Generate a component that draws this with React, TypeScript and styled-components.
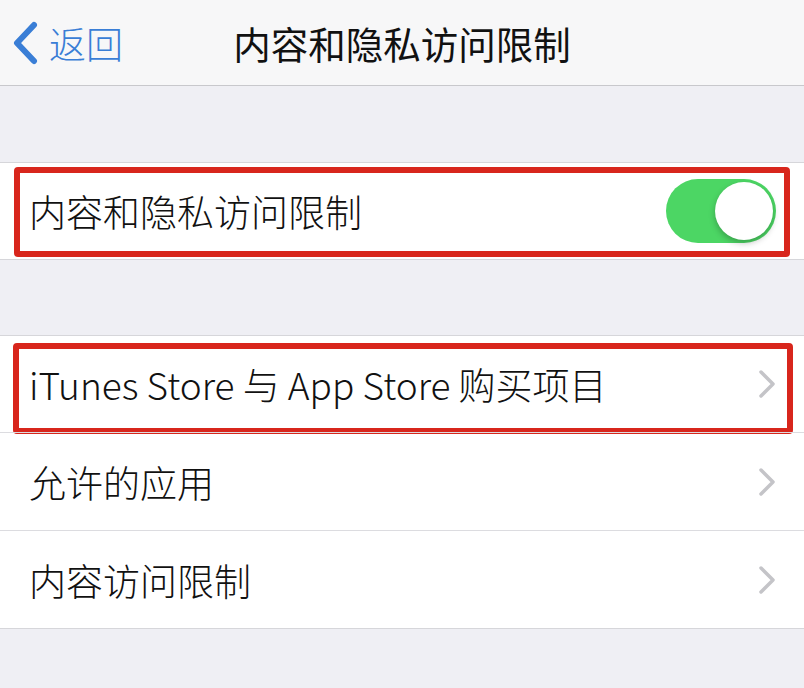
import * as React from 'react';
import styled, { createGlobalStyle } from 'styled-components';

const GlobalStyle = createGlobalStyle`
  html, body {
    margin: 0;
    padding: 0;
    background: #efeff4;
    font-family: "Noto Sans CJK SC", "Noto Sans", sans-serif;
  }
`

const Page = styled.div`
  width: 804px;
  height: 688px;
  background: #efeff4;
  overflow: hidden;
`

const NavBar = styled.div`
  height: 86px;
  background: #f7f7f8;
  border-bottom: 1px solid #c8c8cc;
  display: grid;
  grid-template-columns: 1fr auto 1fr;
  align-items: center;
  box-sizing: border-box;
`

const Back = styled.div`
  display: flex;
  align-items: center;
  gap: 9px;
  padding-left: 12px;
  color: #3a7ed6;
  font-size: 37px;
  font-weight: 300;
`

const Title = styled.div`
  font-size: 37.5px;
  color: #111;
  font-weight: 400;
`

const Section = styled.div<{ $top: number }>`
  margin-top: ${p => p.$top}px;
  background: #fff;
  border-top: 1px solid #d6d6da;
  border-bottom: 1px solid #d6d6da;
`

const Row = styled.div<{ $height: number }>`
  position: relative;
  height: ${p => p.$height}px;
  display: flex;
  align-items: center;
  padding: 0 28px 0 29px;
  box-sizing: border-box;
  & + & {
    border-top: 1px solid #dcdce0;
  }
`

const Label = styled.div`
  flex: 1;
  font-size: 37px;
  font-weight: 300;
  color: #111;
  white-space: nowrap;
`

const Highlight = styled.div<{ $t: number; $b: number; $l: number; $r: number }>`
  position: absolute;
  top: ${p => p.$t}px;
  bottom: ${p => p.$b}px;
  left: ${p => p.$l}px;
  right: ${p => p.$r}px;
  border: 6px solid #d8261c;
  border-radius: 4px;
  pointer-events: none;
`

const Toggle = styled.div`
  width: 110px;
  height: 64px;
  border-radius: 32px;
  background: #4cd664;
  position: relative;
`

const Knob = styled.div`
  position: absolute;
  top: 3px;
  right: 3px;
  width: 58px;
  height: 58px;
  border-radius: 50%;
  background: #fff;
  box-shadow: 0 3px 6px rgba(0, 0, 0, 0.25);
`

const Chevron = () => (
  <svg width="17" height="28" viewBox="0 0 17 28">
    <path d="M2 2 L14 14 L2 26" fill="none" stroke="#c4c4c8" strokeWidth="3.5" strokeLinecap="round" strokeLinejoin="round" />
  </svg>
)

export default function App() {
  return (
    <Page>
      <GlobalStyle />
      <NavBar>
        <Back>
          <svg width="28" height="44" viewBox="0 0 28 44">
            <path d="M22 4 L5 22 L22 40" fill="none" stroke="#3a7ed6" strokeWidth="6" strokeLinecap="round" strokeLinejoin="round" />
          </svg>
          返回
        </Back>
        <Title>内容和隐私访问限制</Title>
        <div />
      </NavBar>
      <Section $top={76}>
        <Row $height={96}>
          <Label>内容和隐私访问限制</Label>
          <Toggle><Knob /></Toggle>
          <Highlight $t={4} $b={2} $l={14} $r={14} />
        </Row>
      </Section>
      <Section $top={75}>
        <Row $height={96}>
          <Label>iTunes Store 与 App Store 购买项目</Label>
          <Chevron />
          <Highlight $t={7} $b={-2} $l={13} $r={11} />
        </Row>
        <Row $height={98}>
          <Label>允许的应用</Label>
          <Chevron />
        </Row>
        <Row $height={98}>
          <Label>内容访问限制</Label>
          <Chevron />
        </Row>
      </Section>
    </Page>
  )
}
